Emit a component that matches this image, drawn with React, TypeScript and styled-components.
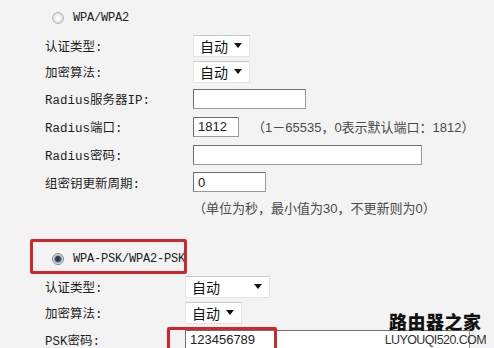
import styled, { createGlobalStyle } from 'styled-components';

const GlobalStyle = createGlobalStyle`
  html, body {
    margin: 0;
    padding: 0;
    background: #f3f3f3;
  }
`;

const Page = styled.div`
  position: relative;
  width: 494px;
  height: 348px;
  overflow: hidden;
  background: #f3f3f3;
  color: #1e1e1e;
  font-family: 'Liberation Mono', 'Noto Sans CJK SC', monospace;
  font-size: 12.5px;
`;

const Section = styled.div<{ $top: number }>`
  display: flex;
  flex-direction: column;
  padding-top: ${(p) => p.$top}px;
`;

const RadioRow = styled.label`
  display: flex;
  align-items: center;
  gap: 9px;
  height: 20px;
  padding-left: 52px;
  font-family: 'Liberation Mono', monospace;
  font-size: 12px;
  letter-spacing: -0.2px;
  color: #222;
`;

const Highlight = styled.div`
  width: 157px;
  height: 35px;
  margin-left: 30px;
  box-sizing: border-box;
  border: 3px solid #d3262b;
  border-radius: 2px;
  display: flex;
  padding-top: 7px;
  overflow: hidden;

  ${RadioRow} {
    padding-left: 19px;
    white-space: nowrap;
  }
`;

const Radio = styled.span<{ $checked?: boolean }>`
  width: 10px;
  height: 10px;
  flex: none;
  border-radius: 50%;
  border: 1px solid ${(p) => (p.$checked ? '#7d8894' : '#b9b9b9')};
  background: ${(p) =>
    p.$checked
      ? 'radial-gradient(circle, #2f3d4c 0 2.5px, #9aa6b2 3.5px, #e6eaee 5px)'
      : 'radial-gradient(circle, #fafafa 0 2px, #dcdcdc 5px)'};
`;

const Row = styled.div<{ $h: number; $label: number }>`
  display: grid;
  grid-template-columns: ${(p) => p.$label}px auto;
  align-items: center;
  height: ${(p) => p.$h}px;
  padding-left: 45px;
`;

const Label = styled.span`
  white-space: nowrap;
`;

const Field = styled.div`
  display: flex;
  align-items: center;
  gap: 13px;
`;

const Select = styled.div<{ $w: number }>`
  width: ${(p) => p.$w}px;
  height: 22px;
  box-sizing: border-box;
  display: flex;
  align-items: center;
  justify-content: space-between;
  padding: 0 7px 0 6px;
  background: #fff;
  border: 1px solid #e4e4e4;
  border-top-color: #c6c6c6;
  font-family: 'Noto Sans CJK SC', sans-serif;
  font-size: 14px;
  color: #111;
`;

const Arrow = styled.span`
  width: 0;
  height: 0;
  border-left: 4px solid transparent;
  border-right: 4px solid transparent;
  border-top: 5px solid #111;
`;

const Input = styled.div<{ $w: number }>`
  width: ${(p) => p.$w}px;
  height: 20px;
  box-sizing: border-box;
  display: flex;
  align-items: center;
  padding-left: 4px;
  background: #fff;
  border: 1px solid #6e6e6e;
  border-right-color: #9a9a9a;
  border-bottom-color: #9a9a9a;
  font-family: 'Liberation Sans', sans-serif;
  font-size: 13px;
  color: #222;
`;

const Hint = styled.span`
  font-family: 'Liberation Sans', 'Noto Sans CJK SC', sans-serif;
  font-size: 13px;
  color: #4a4a4a;
  white-space: nowrap;
`;

const Note = styled(Hint)`
  display: block;
  height: 26px;
  line-height: 26px;
  padding-left: 193px;
`;

const PskField = styled.div`
  position: relative;
`;

const Callout = styled.div`
  position: absolute;
  left: -18px;
  top: -3px;
  width: 110px;
  height: 40px;
  box-sizing: border-box;
  border: 3px solid #d3262b;
  border-radius: 2px;
`;

const Watermark = styled.div`
  position: absolute;
  right: 8px;
  bottom: 2px;
  display: flex;
  flex-direction: column;
  align-items: center;
  line-height: 1;
`;

const MarkTitle = styled.span`
  font-family: 'Noto Sans CJK SC', sans-serif;
  font-weight: 900;
  font-size: 18px;
  letter-spacing: 0.5px;
  color: #111;
`;

const MarkSite = styled.span`
  margin-top: 4px;
  font-family: 'Liberation Sans', sans-serif;
  font-size: 12.5px;
  letter-spacing: -0.6px;
  color: #333;
`;

const App = () => {
  return (
    <Page>
      <GlobalStyle />
      <Section $top={8}>
        <RadioRow>
          <Radio />
          WPA/WPA2
        </RadioRow>
        <Row $h={25} $label={148} style={{ marginTop: 5 }}>
          <Label>认证类型:</Label>
          <Select $w={57}>
            自动 <Arrow />
          </Select>
        </Row>
        <Row $h={27} $label={148}>
          <Label>加密算法:</Label>
          <Select $w={57}>
            自动 <Arrow />
          </Select>
        </Row>
        <Row $h={27} $label={148}>
          <Label>Radius服务器IP:</Label>
          <Input $w={113} />
        </Row>
        <Row $h={29} $label={148}>
          <Label>Radius端口:</Label>
          <Field>
            <Input $w={46}>1812</Input>
            <Hint>（1－65535，0表示默认端口：1812）</Hint>
          </Field>
        </Row>
        <Row $h={27} $label={148}>
          <Label>Radius密码:</Label>
          <Input $w={229} />
        </Row>
        <Row $h={28} $label={148}>
          <Label>组密钥更新周期:</Label>
          <Input $w={73}>0</Input>
        </Row>
        <Note>（单位为秒，最小值为30，不更新则为0）</Note>
      </Section>

      <Section $top={17}>
        <Highlight>
          <RadioRow>
            <Radio $checked />
            WPA-PSK/WPA2-PSK
          </RadioRow>
        </Highlight>
        <Row $h={25} $label={140}>
          <Label>认证类型:</Label>
          <Select $w={85}>
            自动 <Arrow />
          </Select>
        </Row>
        <Row $h={27} $label={140}>
          <Label>加密算法:</Label>
          <Select $w={57}>
            自动 <Arrow />
          </Select>
        </Row>
        <Row $h={27} $label={140}>
          <Label>PSK密码:</Label>
          <PskField>
            <Input $w={285}>123456789</Input>
            <Callout />
          </PskField>
        </Row>
      </Section>

      <Watermark>
        <MarkTitle>路由器之家</MarkTitle>
        <MarkSite>LUYOUQI520.COM</MarkSite>
      </Watermark>
    </Page>
  );
};

export default App;
